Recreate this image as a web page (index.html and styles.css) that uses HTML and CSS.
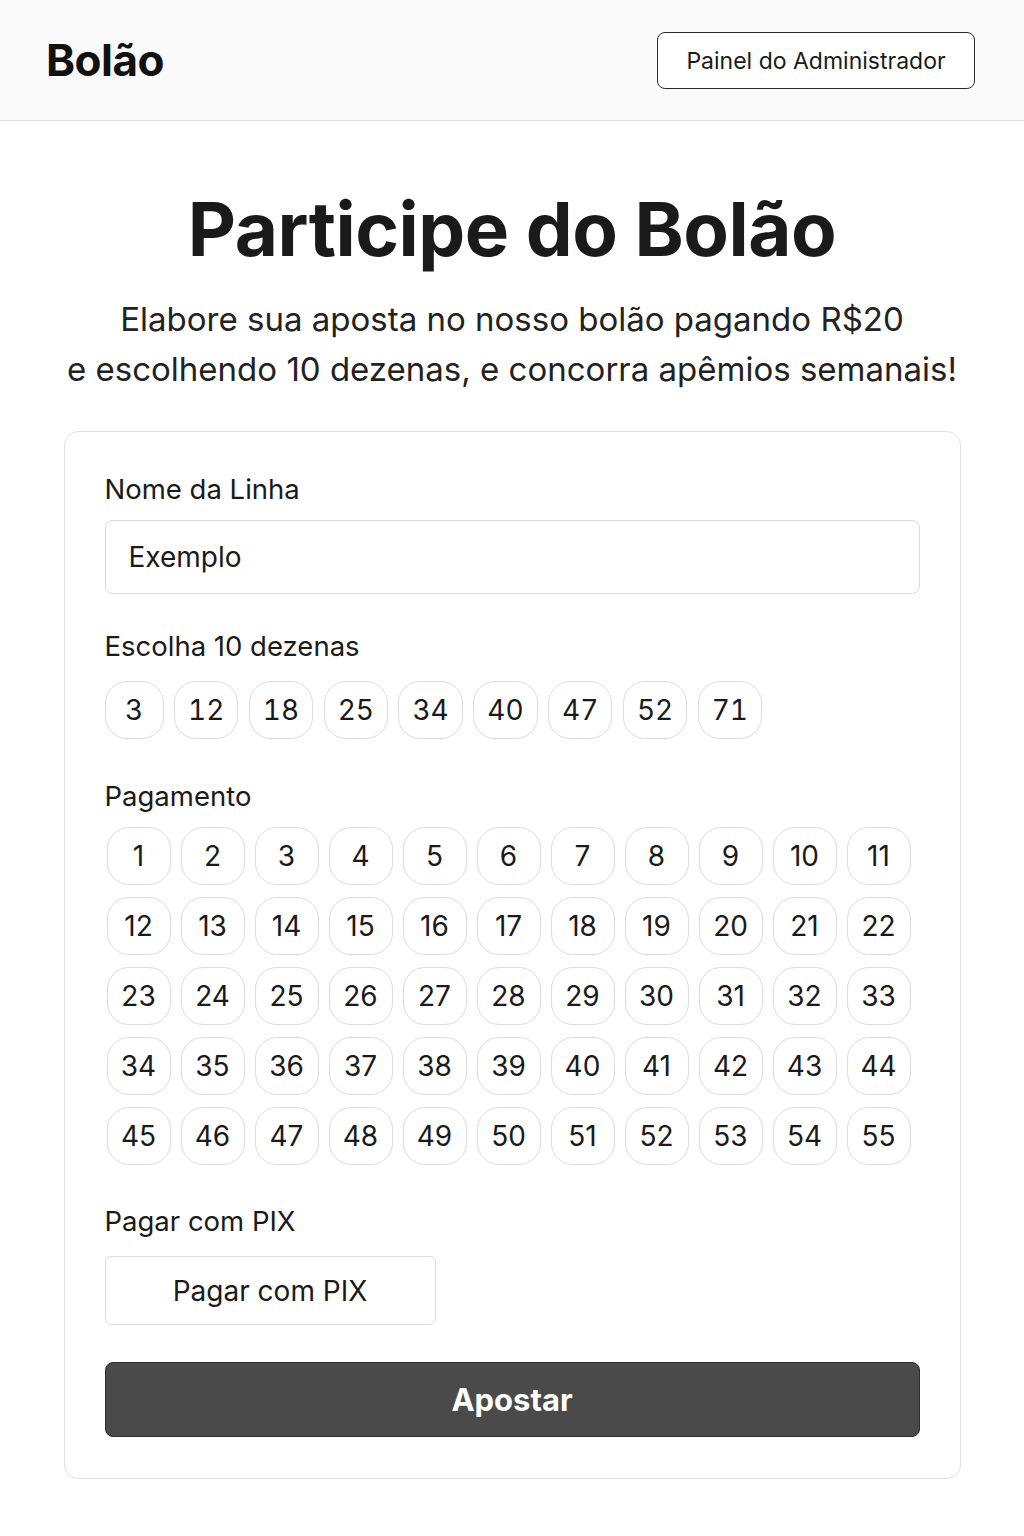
FILE: index.html
```html
<!DOCTYPE html>
<html lang="pt-BR">
<head>
<meta charset="utf-8">
<title>Bolão</title>
<link rel="stylesheet" href="styles.css">
</head>
<body>
<header class="topbar">
  <div class="brand">Bolão</div>
  <button class="admin-btn">Painel do Administrador</button>
</header>
<main class="main">
  <h1 class="title">Participe do Bolão</h1>
  <p class="subtitle">Elabore sua aposta no nosso bolão pagando R$20<br>e escolhendo 10 dezenas, e concorra apêmios semanais!</p>
  <section class="card">
    <label class="label">Nome da Linha</label>
    <div class="input">Exemplo</div>
    <div class="label label-gap">Escolha 10 dezenas</div>
    <div class="chips">
      <span class="chip">3</span><span class="chip">12</span><span class="chip">18</span><span class="chip">25</span><span class="chip">34</span><span class="chip">40</span><span class="chip">47</span><span class="chip">52</span><span class="chip">71</span>
    </div>
    <div class="label label-gap2">Pagamento</div>
    <div class="grid">
      <span class="ball">1</span><span class="ball">2</span><span class="ball">3</span><span class="ball">4</span><span class="ball">5</span><span class="ball">6</span><span class="ball">7</span><span class="ball">8</span><span class="ball">9</span><span class="ball">10</span><span class="ball">11</span>
      <span class="ball">12</span><span class="ball">13</span><span class="ball">14</span><span class="ball">15</span><span class="ball">16</span><span class="ball">17</span><span class="ball">18</span><span class="ball">19</span><span class="ball">20</span><span class="ball">21</span><span class="ball">22</span>
      <span class="ball">23</span><span class="ball">24</span><span class="ball">25</span><span class="ball">26</span><span class="ball">27</span><span class="ball">28</span><span class="ball">29</span><span class="ball">30</span><span class="ball">31</span><span class="ball">32</span><span class="ball">33</span>
      <span class="ball">34</span><span class="ball">35</span><span class="ball">36</span><span class="ball">37</span><span class="ball">38</span><span class="ball">39</span><span class="ball">40</span><span class="ball">41</span><span class="ball">42</span><span class="ball">43</span><span class="ball">44</span>
      <span class="ball">45</span><span class="ball">46</span><span class="ball">47</span><span class="ball">48</span><span class="ball">49</span><span class="ball">50</span><span class="ball">51</span><span class="ball">52</span><span class="ball">53</span><span class="ball">54</span><span class="ball">55</span>
    </div>
    <div class="label label-gap3">Pagar com PIX</div>
    <button class="pix-btn">Pagar com PIX</button>
    <button class="submit-btn">Apostar</button>
  </section>
</main>
</body>
</html>
```
FILE: styles.css
```css
* { box-sizing: border-box; }
html, body { margin: 0; padding: 0; background: #ffffff; }
body {
  font-family: Inter, "Noto Sans", "Liberation Sans", sans-serif;
  color: #1a1a1a;
}
.topbar {
  height: 121px;
  background: #fafafa;
  border-bottom: 1px solid #e2e2e2;
  display: flex;
  align-items: center;
  justify-content: space-between;
  padding: 0 49px 0 46px;
}
.brand {
  font-size: 44px;
  font-weight: 700;
  letter-spacing: -0.5px;
  color: #111;
}
.admin-btn {
  width: 318px;
  height: 57px;
  margin-top: 1px;
  background: #ffffff;
  border: 1px solid #2a2a2a;
  border-radius: 8px;
  font-family: inherit;
  font-size: 23px;
  color: #1a1a1a;
}
.main {
  padding: 65px 0 60px;
}
.title {
  margin: 0;
  text-align: center;
  font-size: 74.5px;
  line-height: 86px;
  font-weight: 700;
  letter-spacing: -0.5px;
  color: #1a1a1a;
}
.subtitle {
  margin: 22px 0 0;
  text-align: center;
  font-size: 33px;
  line-height: 50px;
  color: #222;
}
.card {
  width: 897px;
  margin: 37px auto 0;
  border: 1px solid #e2e2e2;
  border-radius: 14px;
  padding: 40px 40px 41px;
  display: flex;
  flex-direction: column;
}
.label {
  display: block;
  font-size: 27.5px;
  line-height: 34px;
  color: #1a1a1a;
}
.input {
  margin-top: 14px;
  height: 74px;
  border: 1px solid #d9d9d9;
  border-radius: 8px;
  padding: 0 23px;
  display: flex;
  align-items: center;
  font-size: 28px;
  color: #1a1a1a;
}
.label-gap { margin-top: 35px; }
.label-gap2 { margin-top: 40px; }
.label-gap3 { margin-top: 39px; }
.chips {
  margin-top: 18px;
  display: flex;
  gap: 10.5px;
}
.chip {
  height: 58px;
  min-width: 59px;
  padding: 0 13px;
  border: 1px solid #dcdcdc;
  border-radius: 22px;
  display: flex;
  align-items: center;
  justify-content: center;
  font-size: 28px;
  font-variant-numeric: tabular-nums;
  color: #1a1a1a;
}
.grid {
  margin-top: 14px;
  padding: 0 9px 0 2px;
  display: grid;
  grid-template-columns: repeat(11, 1fr);
  column-gap: 10px;
  row-gap: 12px;
}
.ball {
  height: 58px;
  border: 1px solid #dcdcdc;
  border-radius: 22px;
  display: flex;
  align-items: center;
  justify-content: center;
  font-size: 28px;
  color: #1a1a1a;
}
.pix-btn {
  margin-top: 18px;
  width: 331px;
  height: 69px;
  background: #fff;
  border: 1px solid #dcdcdc;
  border-radius: 6px;
  font-family: inherit;
  font-size: 28px;
  color: #1a1a1a;
}
.submit-btn {
  margin-top: 37px;
  height: 75px;
  width: 100%;
  background: #4a4a4a;
  border: 1px solid #2e2e2e;
  border-radius: 8px;
  font-family: inherit;
  font-size: 31px;
  font-weight: 700;
  color: #ffffff;
}
```
